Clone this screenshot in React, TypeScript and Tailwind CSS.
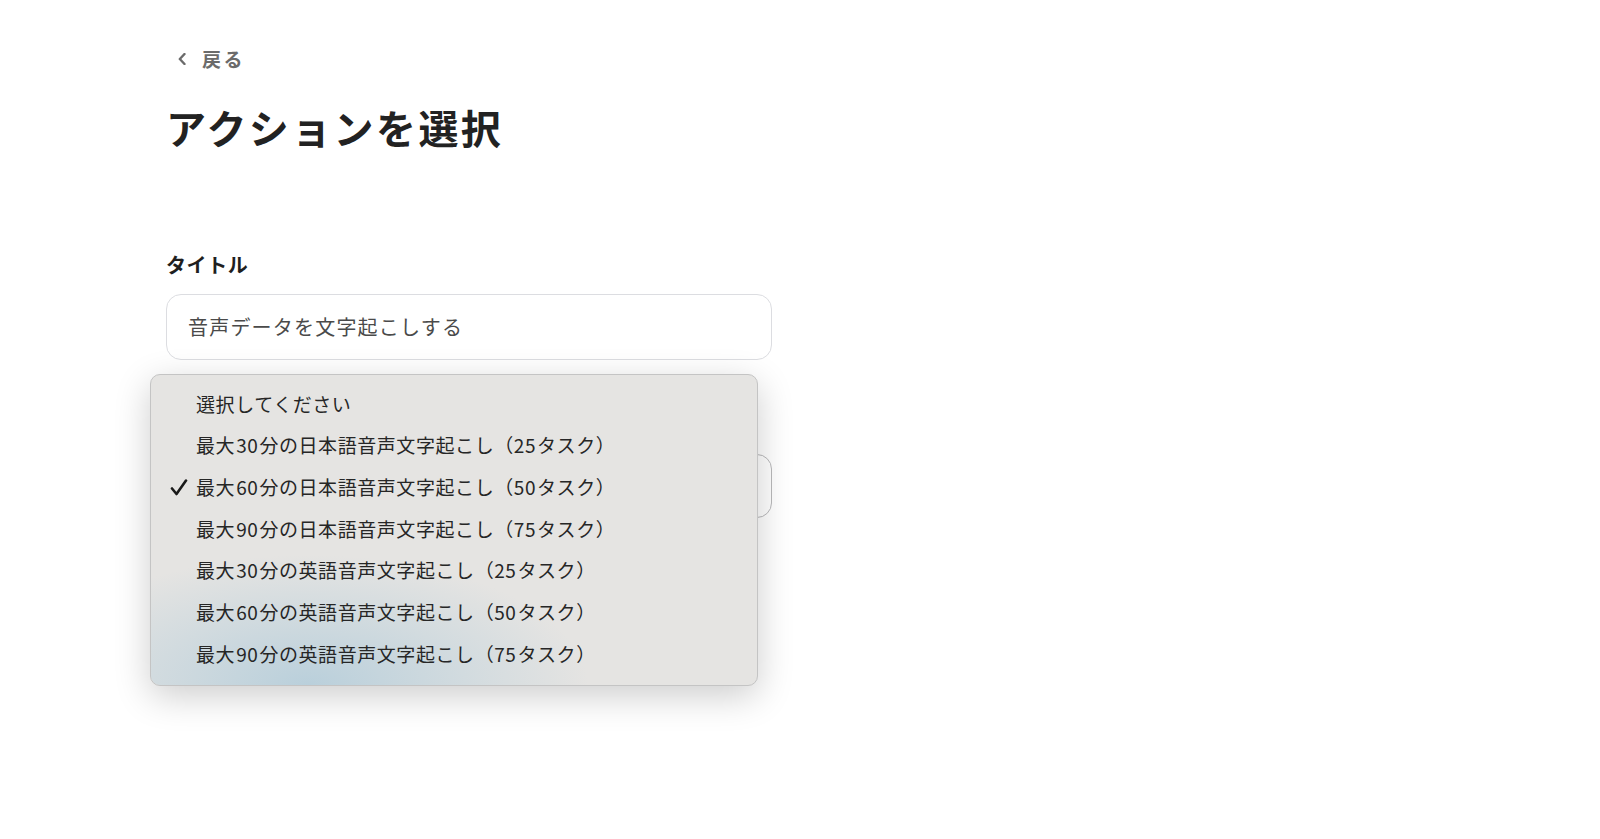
import React from "react";

const options = [
  { label: "選択してください" },
  { pre: "最大", num: "30", mid: "分の日本語音声文字起こし（", task: "25", post: "タスク）" },
  { pre: "最大", num: "60", mid: "分の日本語音声文字起こし（", task: "50", post: "タスク）", checked: true },
  { pre: "最大", num: "90", mid: "分の日本語音声文字起こし（", task: "75", post: "タスク）" },
  { pre: "最大", num: "30", mid: "分の英語音声文字起こし（", task: "25", post: "タスク）" },
  { pre: "最大", num: "60", mid: "分の英語音声文字起こし（", task: "50", post: "タスク）" },
  { pre: "最大", num: "90", mid: "分の英語音声文字起こし（", task: "75", post: "タスク）" },
];

function Check() {
  return (
    <svg width="18" height="17" viewBox="0 0 18 17" fill="none">
      <path
        d="M2 9.5 L6.5 15 L16 1.5"
        stroke="#1a1a1a"
        strokeWidth="2.6"
        strokeLinecap="round"
        strokeLinejoin="round"
      />
    </svg>
  );
}

export default function App() {
  return (
    <div className="min-h-screen bg-white font-['Noto_Sans_CJK_JP','Noto_Sans',sans-serif] text-[#222]">
      <div className="w-[772px] pl-[166px] pt-[46px]">
        {/* back link */}
        <a href="#" className="flex h-[26px] items-center gap-[16px] pl-[12px] text-[#6b6b6b]">
          <svg width="8" height="12" viewBox="0 0 8 12" fill="none">
            <path d="M6.5 1 L1.8 6 L6.5 11" stroke="#6b6b6b" strokeWidth="2.4" strokeLinecap="round" strokeLinejoin="round" />
          </svg>
          <span className="text-[19px] font-bold tracking-[0.13em]">戻る</span>
        </a>

        <h1 className="mt-[31px] text-[40px] font-bold leading-[48px] tracking-[0.06em] text-[#222]">
          アクションを選択
        </h1>

        {/* title field */}
        <div className="mt-[100px]">
          <label className="block text-[20px] font-bold leading-[28px] tracking-[0.03em] text-[#1f1f1f]">
            タイトル
          </label>
          <div className="mt-[15px] flex h-[66px] items-center rounded-[15px] border border-[#dcdde1] bg-white px-[21px]">
            <span className="text-[20px] tracking-[0.06em] text-[#4a4a4a]">音声データを文字起こしする</span>
          </div>
        </div>

        {/* action select (covered by the open list) */}
        <div className="relative mt-[94px]">
          <div className="h-[64px] rounded-[15px] border border-[#b9b9bb] bg-white" />

          {/* open native-style dropdown */}
          <div className="absolute left-[-16px] top-[-80px] z-10 w-[608px] overflow-hidden rounded-[10px] border border-[#c4c4c4] bg-[#e5e4e2] pb-[10px] pt-[8px] shadow-[0_10px_36px_rgba(0,0,0,0.2)]">
            <div className="pointer-events-none absolute inset-0 bg-[radial-gradient(ellipse_280px_130px_at_26%_100%,rgba(178,204,218,0.85),rgba(178,204,218,0)_100%)]" />
            <ul className="relative">
              {options.map((o, i) => (
                <li key={i} className="flex h-[41.7px] items-center pl-[19px] text-[19px] tracking-[0.03em] text-[#262626]">
                  <span className="flex w-[26px] items-center">{o.checked ? <Check /> : null}</span>
                  {o.label ? (
                    <span>{o.label}</span>
                  ) : (
                    <span>
                      {o.pre}
                      <span className="mx-[1px]">{o.num}</span>
                      {o.mid}
                      <span className="mr-[1px]">{o.task}</span>
                      {o.post}
                    </span>
                  )}
                </li>
              ))}
            </ul>
          </div>
        </div>
      </div>
    </div>
  );
}
